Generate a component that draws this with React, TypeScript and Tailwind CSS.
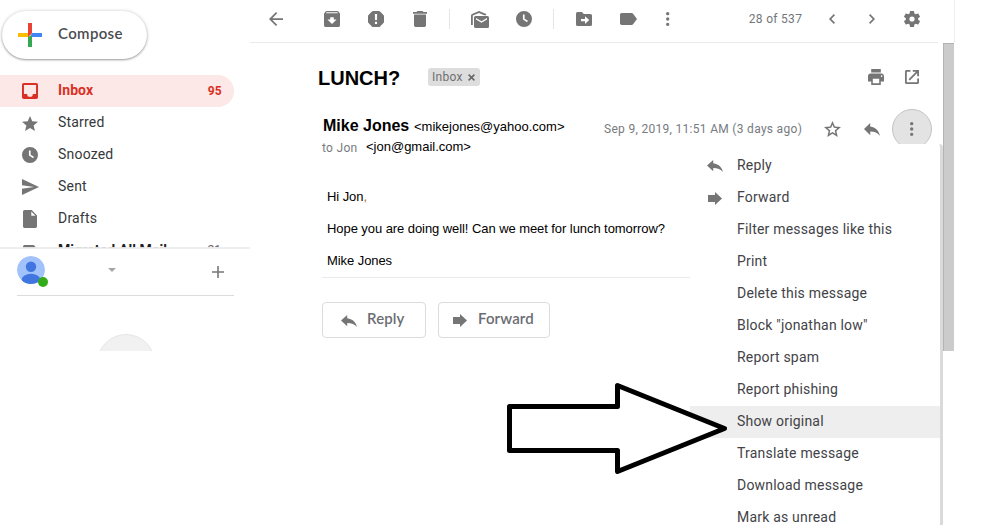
import React from "react";

type IconProps = { d: string; box?: string; w: number; h: number; className?: string };

function Icon({ d, box = "3 3 18 18", w, h, className = "text-[#757575]" }: IconProps) {
  return (
    <svg width={w} height={h} viewBox={box} preserveAspectRatio="none" className={"block shrink-0 " + className} fill="currentColor" fillRule="evenodd">
      <path d={d} />
    </svg>
  );
}

const P = {
  back: "M20 11H7.83l5.59-5.59L12 4l-8 8 8 8 1.41-1.41L7.83 13H20v-2z",
  archive:
    "M20.54 5.23l-1.39-1.68C18.88 3.21 18.47 3 18 3H6c-.47 0-.88.21-1.16.55L3.46 5.23C3.17 5.57 3 6.02 3 6.5V19c0 1.1.9 2 2 2h14c1.1 0 2-.9 2-2V6.5c0-.48-.17-.93-.46-1.27zM12 17.5L6.8 12.6H10v-2.6h4v2.6h3.2L12 17.5zM5.12 5.4l.81-1h12l.94 1H5.12z",
  spam: "M15.2 3H8.8Q8 3 7.4 3.6L3.6 7.4Q3 8 3 8.8v6.4q0 .8.6 1.4l3.8 3.8q.6.6 1.4.6h6.4q.8 0 1.4-.6l3.8-3.8q.6-.6.6-1.4V8.8q0-.8-.6-1.4l-3.8-3.8Q16 3 15.2 3zM10.8 6.4h2.4v6.8h-2.4zM10.8 15.2h2.4v2.4h-2.4z",
  trash: "M6 19c0 1.1.9 2 2 2h8c1.1 0 2-.9 2-2V7H6v12zM19 4h-3.5l-1-1h-5l-1 1H5v2h14V4z",
  unread:
    "M0 14V4.6Q0 3.6 1 3L8 0l7.2 3v1.2h-2L8 2 1.8 4.6V14zM5 5h11.500q1.500 0 1.500 1.500v9q0 1.500-1.500 1.500H4.500Q3 17 3 15.500v-9Q3 5 4.500 5zM5 7v1.500l5.500 3.200 5.500-3.200V7l-5.500 3.200z",
  clock: "M12 3a9 9 0 1 0 0 18 9 9 0 0 0 0-18zM10.800 7h1.900v4.800l3.700 2.300-.9 1.500-4.700-2.900z",
  move: "M1.600 0H6l1.800 2h6.700Q16 2 16 3.500v9q0 1.500-1.500 1.500h-13Q0 14 0 12.500v-11Q0 0 1.600 0zM5 6.900v2.400h4v2.700L13.200 8.100 9 4.200v2.700z",
  label:
    "M17.63 5.84C17.27 5.33 16.67 5 16 5L5 5.01C3.9 5.01 3 5.9 3 7v10c0 1.1.9 1.99 2 1.99L16 19c.67 0 1.27-.33 1.63-.84L22 12l-4.37-6.16z",
  dots: "M2 0a2 2 0 1 0 0 4 2 2 0 0 0 0-4zm0 6.500a2 2 0 1 0 0 4 2 2 0 0 0 0-4zm0 6.500a2 2 0 1 0 0 4 2 2 0 0 0 0-4z",
  left: "M15.41 7.41L14 6l-6 6 6 6 1.41-1.41L10.83 12z",
  right: "M10 6L8.59 7.41 13.17 12l-4.58 4.59L10 18l6-6z",
  gear: "M19.43 12.98c.04-.32.07-.64.07-.98s-.03-.66-.07-.98l2.11-1.65c.19-.15.24-.42.12-.64l-2-3.46c-.12-.22-.39-.3-.61-.22l-2.49 1c-.52-.4-1.08-.73-1.69-.98l-.38-2.65C14.46 2.18 14.25 2 14 2h-4c-.25 0-.46.18-.49.42l-.38 2.65c-.61.25-1.17.59-1.69.98l-2.49-1c-.23-.09-.49 0-.61.22l-2 3.46c-.13.22-.07.49.12.64l2.11 1.65c-.04.32-.07.65-.07.98s.03.66.07.98l-2.11 1.65c-.19.15-.24.42-.12.64l2 3.46c.12.22.39.3.61.22l2.49-1c.52.4 1.08.73 1.69.98l.38 2.65c.03.24.24.42.49.42h4c.25 0 .46-.18.49-.42l.38-2.65c.61-.25 1.17-.59 1.69-.98l2.49 1c.23.09.49 0 .61-.22l2-3.46c.12-.22.07-.49-.12-.64l-2.11-1.65zM12 15.200a3.200 3.200 0 1 1 0-6.400 3.200 3.200 0 0 1 0 6.400z",
  print:
    "M19 8H5c-1.66 0-3 1.34-3 3v6h4v4h12v-4h4v-6c0-1.66-1.34-3-3-3zm-3 11H8v-5h8v5zm3-7c-.55 0-1-.45-1-1s.45-1 1-1 1 .45 1 1-.45 1-1 1zm-1-9H6v4h12V3z",
  open: "M18.700 18.700H5.300V5.300H10V3H5c-1.110 0-2 .9-2 2v14c0 1.100.89 2 2 2h14c1.100 0 2-.9 2-2v-5h-2.300v4.700zM13 3v2.300h4.100l-9.500 9.500 1.600 1.600 9.500-9.500V11H21V3h-8z",
  reply: "M10 9V5l-7 7 7 7v-4.100c5 0 8.500 1.600 11 5.100-1-5-4-10-11-11z",
  forward: "M0 3h7V0l7 6.500L7 13v-3H0z",
  star: "M12 17.270L18.180 21l-1.640-7.030L22 9.240l-7.190-.61L12 2 9.190 8.630 2 9.240l5.460 4.730L5.820 21z",
  starLine:
    "M22 9.240l-7.190-.62L12 2 9.190 8.630 2 9.240l5.460 4.730L5.820 21 12 17.270 18.180 21l-1.630-7.030L22 9.240zM12 15.100l-3.500 2.100 .93-4-3.100-2.680 4.090-.36L12 6.400l1.590 3.760 4.090.36-3.100 2.680.93 4L12 15.100z",
  send: "M2.010 21L23 12 2.010 3 2 10l15 2-15 2z",
  draft: "M6 2c-1.100 0-2 .9-2 2v16c0 1.100.9 2 2 2h12c1.100 0 2-.9 2-2V8l-6-6H6zM13.500 3.800L18.200 8.500H13.500z",
  inbox:
    "M5 3h14q2 0 2 2v14q0 2-2 2H5q-2 0-2-2V5q0-2 2-2zM5.200 5.200v10.100h3.600a3.200 3.200 0 0 0 6.400 0h3.600V5.200z",
};

function Cell({ w, children }: { w: string; children: React.ReactNode }) {
  return <div className={"flex h-full shrink-0 items-center justify-center " + w}>{children}</div>;
}

function Folder({ icon, name }: { icon: React.ReactNode; name: string }) {
  return (
    <div className="flex h-8 items-center">
      <div className="flex w-[60px] shrink-0 justify-center">{icon}</div>
      <span className="-ml-[2px] -mt-[2px] text-sm tracking-[0.2px] text-[#36383b]">{name}</span>
    </div>
  );
}

function Sidebar() {
  return (
    <aside className="relative flex h-[351px] w-[250px] shrink-0 flex-col overflow-hidden">
      <div className="h-[248px] shrink-0 overflow-hidden">
        <div className="ml-[2px] mt-[11px] flex h-12 w-[145px] items-center rounded-full bg-white pl-4 shadow-[0_1px_2px_rgba(60,64,67,0.45),0_0_3px_1px_rgba(60,64,67,0.13)]">
          <svg width="24" height="24" viewBox="0 0 24 24" className="block shrink-0">
            <path d="M10 0h4v10l-4 4z" fill="#ea4335" />
            <path d="M0 10h10v4H0z" fill="#fbbc04" />
            <path d="M14 10h10v4H12z" fill="#4285f4" />
            <path d="M10 14l4-2v12h-4z" fill="#34a853" />
            <path d="M10 10h4l-4 4z" fill="#ea4335" />
          </svg>
          <span className="ml-4 -mt-[3px] font-[Lato,sans-serif] text-[15px] font-semibold tracking-[0.35px] text-[#4a4d51]">Compose</span>
        </div>
        <div className="mt-4 flex h-8 w-[234px] items-center rounded-r-full bg-[#fce8e6] text-[#d93025]">
          <div className="flex w-[60px] justify-center">
            <Icon d={P.inbox} w={16} h={16} className="text-[#d93025]" />
          </div>
          <span className="-ml-[2px] -mt-[2px] flex-1 text-sm font-bold tracking-[0.1px]">Inbox</span>
          <span className="mr-3 text-xs font-bold tracking-[0.3px]">95</span>
        </div>
        <Folder icon={<Icon d={P.star} box="2 2 20 19" w={16} h={15} />} name="Starred" />
        <Folder icon={<Icon d={P.clock} w={16} h={16} />} name="Snoozed" />
        <Folder icon={<Icon d={P.send} box="2 3 21 18" w={17} h={16} />} name="Sent" />
        <Folder icon={<Icon d={P.draft} box="4 2 16 20" w={14} h={18} />} name="Drafts" />
        <div className="flex h-8 items-center">
          <div className="flex w-[60px] shrink-0 justify-center">
            <Icon d={P.label} box="3 5 19 14" w={15} h={12} />
          </div>
          <span className="-ml-[2px] -mt-[3px] flex-1 text-sm font-bold tracking-[0.1px] text-[#202124]">Migrated All Mail</span>
          <span className="-mt-[2px] mr-[29px] text-xs text-[#5f6368]">21</span>
        </div>
      </div>
      <div className="absolute left-0 top-[247px] h-[2px] w-[250px] bg-[#ececec]/90" />
      <div className="ml-[17px] flex h-[48px] w-[217px] shrink-0 items-center border-b border-[#dcdcdc]">
        <div className="relative -mt-[3px] h-7 w-7">
          <svg width="28" height="28" viewBox="0 0 28 28" className="block">
            <clipPath id="avatar"><circle cx="14" cy="14" r="14" /></clipPath>
            <g clipPath="url(#avatar)">
              <circle cx="14" cy="14" r="14" fill="#a1c2fa" />
              <circle cx="14" cy="10.800" r="5.200" fill="#4175df" />
              <ellipse cx="14" cy="23.500" rx="9.200" ry="5.800" fill="#4175df" />
            </g>
          </svg>
          <span className="absolute left-[21px] top-[21px] h-[10px] w-[10px] rounded-full bg-[#33ac1a]" />
        </div>
        <svg width="8" height="4" viewBox="0 0 8 4" className="ml-[63px] -mt-[4px] fill-[#a6a6a6]"><path d="M0 0h8L4 4z" /></svg>
        <svg width="12" height="12" viewBox="0 0 12 12" className="ml-auto mr-[10px] fill-[#777]"><path d="M5.200 0h1.600v5.200H12v1.600H6.800V12H5.200V6.800H0V5.200h5.200z" /></svg>
      </div>
      <div className="ml-[97px] mt-[38px] h-[58px] w-[58px] shrink-0 rounded-full border border-[#e6e6e6] bg-[#f1f1f1]" />
    </aside>
  );
}

function Toolbar() {
  return (
    <div className="flex h-[43px] w-[688px] shrink-0 border-b border-[#ebebeb] pb-[4px] pl-[4px]">
      <Cell w="w-[44px]"><Icon d={P.back} box="4 4 16 16" w={14} h={14} /></Cell>
      <Cell w="ml-3 w-[44px]"><Icon d={P.archive} w={16} h={16} /></Cell>
      <Cell w="w-[44px]"><Icon d={P.spam} w={16} h={16} /></Cell>
      <Cell w="w-[44px]"><Icon d={P.trash} box="5 3 14 18" w={14} h={16} /></Cell>
      <Cell w="w-[16px] pr-[2px]"><span className="h-5 w-px bg-[#e5e5e5]" /></Cell>
      <Cell w="w-[44px]"><Icon d={P.unread} box="0 0 18 17" w={18} h={17} /></Cell>
      <Cell w="w-[44px]"><Icon d={P.clock} w={16} h={16} /></Cell>
      <Cell w="w-[16px] pr-[2px]"><span className="h-5 w-px bg-[#e5e5e5]" /></Cell>
      <Cell w="w-[44px]"><Icon d={P.move} box="0 0 16 14" w={16} h={14} /></Cell>
      <Cell w="w-[44px]"><Icon d={P.label} box="3 5 19 14" w={17} h={12} /></Cell>
      <Cell w="w-[36px]"><Icon d={P.dots} box="0 0 4 17" w={3.4} h={14} /></Cell>
      <Cell w="ml-[63px] w-[53px]">
        <span className="whitespace-nowrap text-xs tracking-[0.3px] text-[#73767a]">28 of 537</span>
      </Cell>
      <Cell w="ml-[10px] w-[40px]"><Icon d={P.left} box="8 6 7.410 12" w={6} h={10} /></Cell>
      <Cell w="w-[40px]"><Icon d={P.right} box="8.590 6 7.410 12" w={6} h={10} /></Cell>
      <Cell w="w-[40px]"><Icon d={P.gear} box="2.250 2 19.500 20" w={16} h={16} /></Cell>
    </div>
  );
}

function ActionButton({ icon, label, className }: { icon: React.ReactNode; label: string; className: string }) {
  return (
    <div className={"flex h-9 items-center rounded border border-[#dadce0] " + className}>
      {icon}
      <span className="-mt-[3px] font-[Lato,sans-serif] text-[15px] font-semibold tracking-[0.1px] text-[#6a6d72]">{label}</span>
    </div>
  );
}

function Message() {
  return (
    <div className="flex w-[688px] flex-col font-['Liberation_Sans',Arial,sans-serif]">
      <div className="flex h-[68px] items-center pl-[68px]">
        <h1 className="mt-[2px] w-[110px] whitespace-nowrap text-[20px] font-bold leading-none text-black">LUNCH?</h1>
        <div className="flex h-[18px] w-[52px] items-center rounded-[3px] bg-[#ddd] pl-[4px] font-[Roboto,sans-serif] text-xs tracking-[0.3px] text-[#707070]">
          Inbox
          <svg width="7" height="7" viewBox="0 0 7 7" className="ml-[5px] mt-px" stroke="#666" strokeWidth="1.500"><path d="M.6.6l5.800 5.800M6.400.6L.6 6.400" /></svg>
        </div>
        <div className="ml-auto flex pr-[19px]">
          <Icon d={P.print} box="2 3 20 18" w={16} h={16} />
          <Icon d={P.open} w={14} h={14} className="ml-[21px] mt-px text-[#757575]" />
        </div>
      </div>
      <div className="flex h-[77px]">
        <div className="w-[354px] pl-[73px] pt-[3px]">
          <div className="flex h-5 items-baseline whitespace-nowrap">
            <span className="w-[91px] text-[16px] font-bold text-black">Mike Jones</span>
            <span className="text-[13px] text-black">&lt;mikejones@yahoo.com&gt;</span>
          </div>
          <div className="-ml-px flex h-5 items-start whitespace-nowrap">
            <span className="mt-[6px] w-[44px] font-[Roboto,sans-serif] text-xs tracking-[0.3px] text-[#777b80]">to Jon</span>
            <span className="mt-[3px] text-[13px] text-black">&lt;jon@gmail.com&gt;</span>
          </div>
        </div>
        <div className="flex h-9 items-center">
          <span className="w-[208px] whitespace-nowrap font-[Roboto,sans-serif] text-xs tracking-[0.3px] text-[#777b80]">Sep 9, 2019, 11:51 AM (3 days ago)</span>
          <Cell w="w-[40px]"><Icon d={P.starLine} box="2 2 20 19" w={17} h={16} /></Cell>
          <Cell w="w-[40px]"><Icon d={P.reply} box="3 5 18 15" w={16} h={13} /></Cell>
          <div className="flex h-10 w-10 shrink-0 items-center justify-center rounded-full border border-[#c4c4c8] bg-[#e3e3e3]">
            <Icon d={P.dots} box="0 0 4 17" w={3.400} h={14} />
          </div>
        </div>
      </div>
      <div className="ml-[72px] flex h-[90px] w-[368px] flex-col border-b border-[#ebebeb] pl-[5px] text-[13px] leading-8 tracking-[-0.07px] text-black">
        <p className="-mt-[7px] h-8">Hi Jon<span className="text-[#b86a2c]">,</span></p>
        <p className="h-8 whitespace-nowrap">Hope you are doing well! Can we meet for lunch tomorrow?</p>
        <p className="h-8">Mike Jones</p>
      </div>
      <div className="ml-[72px] mt-6 flex gap-3">
        <ActionButton className="w-[104px] gap-[10px] pl-[18px]" icon={<Icon d={P.reply} box="3 5 18 15" w={16} h={12} className="mt-px text-[#757575]" />} label="Reply" />
        <ActionButton className="w-[112px] gap-[11px] pl-[14px]" icon={<Icon d={P.forward} box="0 0 14 13" w={14} h={13} />} label="Forward" />
      </div>
    </div>
  );
}

const menu = [
  "Reply", "Forward", "Filter messages like this", "Print", "Delete this message", 'Block "jonathan low"',
  "Report spam", "Report phishing", "Show original", "Translate message", "Download message", "Mark as unread",
];

function MessageMenu() {
  return (
    <div className="absolute left-[690px] top-[144px] flex h-[381px] w-[253px] flex-col overflow-hidden rounded-tr border-r-[3px] border-[#dadada] bg-white pt-[6px]">
      {menu.map((m, i) => (
        <div key={m} className={"flex h-8 shrink-0 items-center text-sm tracking-[0.2px] text-[#424347] " + (m === "Show original" ? "bg-[#eee]" : "")}>
          <div className="flex w-[47px] shrink-0 pl-[17px]">
            {i === 0 && <Icon d={P.reply} box="3 5 18 15" w={16} h={12} />}
            {i === 1 && <Icon d={P.forward} box="0 0 14 13" w={14} h={13} className="ml-px text-[#757575]" />}
          </div>
          <span className="-mt-[2px] whitespace-nowrap">{m}</span>
        </div>
      ))}
    </div>
  );
}

export default function App() {
  return (
    <div className="relative flex h-[525px] w-[991px] overflow-hidden bg-white font-[Roboto,sans-serif]">
      <Sidebar />
      <main className="flex w-[693px] shrink-0 flex-col">
        <Toolbar />
        <Message />
      </main>
      <div className="flex w-3 flex-col">
        <div className="h-[43px] shrink-0 border-r border-[#eee]" />
        <div className="h-[308px] w-[11px] shrink-0 border-l border-t border-[#b4b4b4] bg-[#cbcbcb]" />
      </div>
      <MessageMenu />
      {/* Pointer arrow drawn over the menu */}
      <svg className="absolute left-[500px] top-[375px]" width="235" height="105" viewBox="500 375 235 105">
        <path d="M509.500 406.500H617.500V385.500L724.500 428.500L617.500 471.500V450.500H509.500Z" fill="white" stroke="black" strokeWidth="5" strokeLinejoin="round" />
      </svg>
    </div>
  );
}
